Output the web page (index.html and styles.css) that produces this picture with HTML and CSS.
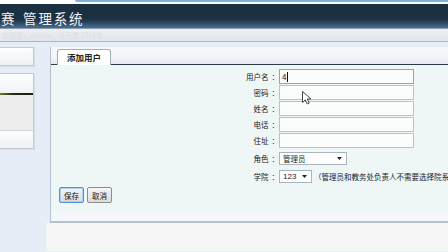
FILE: index.html
```html
<!DOCTYPE html>
<html lang="zh-CN">
<head>
    <meta charset="UTF-8">
    <title>管理系统 - 添加用户</title>
    <link rel="stylesheet" href="styles.css">
</head>
<body>
    <div class="page">
        <div class="top-strip"><div class="glow"></div></div>
        <div class="header">
            <span class="title">赛 管理系统</span>
        </div>
        <div class="subbar"><span class="welcome">欢迎您：admin　今天是 2014年</span></div>

        <div class="main">
            <div class="side">
                <div class="side-box box-small"></div>
                <div class="side-box box-menu">
                    <div class="menu-head"></div>
                    <div class="menu-line"></div>
                    <div class="menu-body"></div>
                    <div class="menu-foot"></div>
                </div>
            </div>

            <div class="content">
                <div class="panel">
                    <div class="tabs">
                        <div class="tab">添加用户</div>
                    </div>
                    <div class="panel-body">
                        <div class="user-form">
                            <div class="row">
                                <label class="lbl">用户名<span class="colon">：</span></label>
                                <div class="field focused"><span>4</span><span class="caret"></span></div>
                            </div>
                            <div class="row">
                                <label class="lbl">密码<span class="colon">：</span></label>
                                <div class="field"></div>
                            </div>
                            <div class="row">
                                <label class="lbl">姓名<span class="colon">：</span></label>
                                <div class="field"></div>
                            </div>
                            <div class="row">
                                <label class="lbl">电话<span class="colon">：</span></label>
                                <div class="field"></div>
                            </div>
                            <div class="row">
                                <label class="lbl">住址<span class="colon">：</span></label>
                                <div class="field"></div>
                            </div>
                            <div class="row row-select">
                                <label class="lbl">角色<span class="colon">：</span></label>
                                <div class="select role">管理员
                                    <svg class="arrow" width="5" height="3" viewBox="0 0 5 3"><path d="M0 0h5L2.5 3z" fill="#222"/></svg>
                                </div>
                            </div>
                            <div class="row row-select">
                                <label class="lbl">学院<span class="colon">：</span></label>
                                <div class="select college">123
                                    <svg class="arrow" width="5" height="3" viewBox="0 0 5 3"><path d="M0 0h5L2.5 3z" fill="#222"/></svg>
                                </div>
                                <span class="note">（管理员和教务处负责人不需要选择院系）</span>
                            </div>
                        </div>
                        <div class="actions">
                            <button class="btn btn-save">保存</button>
                            <button class="btn">取消</button>
                        </div>
                    </div>
                    <div class="panel-foot"></div>
                </div>
                <div class="below"></div>
            </div>
        </div>

        <svg class="pointer" width="10" height="14" viewBox="0 0 10 14">
            <path d="M0.5 0.5V11.5L3.3 8.8L5.3 13L7.2 12.1L5.3 8H9z" fill="#fff" stroke="#333" stroke-width="0.9" stroke-linejoin="round"/>
        </svg>
    </div>
</body>
</html>
```

FILE: styles.css
```css
body {
    margin: 0;
    width: 448px;
    height: 252px;
    overflow: hidden;
    font-family: "Noto Sans CJK SC", "Liberation Sans", sans-serif;
    background: #e6edf6;
    color: #222;
}
.page {
    position: relative;
    height: 252px;
}
.top-strip {
    height: 2px;
    padding-left: 75px;
    background: #fff;
    border-bottom: 2px solid #fff;
}
.top-strip .glow {
    height: 2px;
    background: #80b2dc;
    border-radius: 0 0 0 3px;
}
.header {
    height: 24px;
    background: linear-gradient(#1b3142 0, #1b3142 62%, #2a4862 78%, #4a6e8f 100%);
    border-bottom: 1px solid #8c9bab;
    display: flex;
    align-items: center;
    padding-left: 1px;
}
.title {
    color: #f2f4f6;
    font-size: 13.5px;
    letter-spacing: 1.8px;
    word-spacing: 2px;
    padding-top: 4px;
    white-space: pre;
}
.subbar {
    height: 12px;
    background: linear-gradient(#eceff3, #e1e5ec);
    border-bottom: 1px solid #adb7c3;
    font-size: 7px;
    line-height: 12px;
    padding-left: 2px;
}
.welcome {
    color: #dadee5;
}
.main {
    display: flex;
    height: 209px;
}
.side {
    width: 50px;
    flex: none;
    padding-top: 5px;
}
.side-box {
    width: 33px;
    border: 1px solid #c2c9d2;
    border-left: none;
    box-shadow: 1px 1px 1px rgba(0,0,0,0.06);
}
.box-small {
    height: 17px;
    background: linear-gradient(#fdfefe, #eef1f5);
    margin-bottom: 7px;
}
.menu-head {
    height: 19px;
    background: linear-gradient(#fdfefe, #f1f3f6);
}
.menu-line {
    height: 2px;
    background: linear-gradient(90deg, #6b7a22, #2a2a1c 40%, #1b1b16);
}
.menu-body {
    height: 35px;
    background: #ededed;
}
.menu-foot {
    height: 17px;
    background: linear-gradient(#fdfefe, #eef1f5);
    border-top: 1px solid #d0d5dc;
}
.content {
    flex: 1;
    padding-top: 5px;
    display: flex;
    flex-direction: column;
    min-width: 0;
}
.panel {
    border-left: 1px solid #b5c1ce;
    border-bottom: 2px solid #b7c1cc;
    background: #f4f8fa;
}
.tabs {
    height: 16px;
    padding-top: 1px;
    background: linear-gradient(#f6f8fa, #f3f5f8 60%, #e3e9f0);
    border-bottom: 1px solid #2b3b4b;
    padding-left: 6px;
    display: flex;
    align-items: flex-end;
}
.tab {
    width: 52px;
    height: 15px;
    margin-bottom: -1px;
    background: #fff;
    border: 1px solid #a5adb6;
    border-bottom: none;
    border-radius: 3px 3px 0 0;
    font-size: 8.5px;
    font-weight: bold;
    line-height: 15px;
    text-align: center;
    color: #222;
}
.panel-body {
    height: 143px;
    background: #eef6f6;
    padding: 4px 0 0 0;
    overflow: hidden;
}
.row {
    display: flex;
    align-items: center;
    height: 15px;
    margin-bottom: 1px;
    white-space: nowrap;
}
.row-select {
    height: 18px;
    margin-bottom: 0;
}
.lbl {
    width: 228px;
    flex: none;
    text-align: right;
    font-size: 7.5px;
    color: #222;
}
.colon {
    margin-left: 3px;
}
.field {
    flex: none;
    width: 131px;
    height: 13px;
    border: 1px solid #b6c3cf;
    background: #fbfdfd;
    font-size: 8px;
    line-height: 13px;
    padding-left: 2px;
    display: flex;
    align-items: center;
}
.field.focused {
    border-color: #7eaad0;
}
.caret {
    width: 1px;
    height: 10px;
    background: #111;
    margin-left: 1px;
}
.select {
    flex: none;
    height: 11px;
    border: 1px solid #a9b4bf;
    background: #fff;
    font-size: 7.5px;
    line-height: 11px;
    padding-left: 3px;
    position: relative;
}
.select .arrow {
    position: absolute;
    right: 4px;
    top: 4px;
}
.role {
    width: 63px;
}
.college {
    width: 28px;
    font-family: "Liberation Sans", sans-serif;
    font-size: 8px;
}
.note {
    margin-left: 2px;
    font-size: 7.5px;
    color: #222;
}
.actions {
    padding: 2px 0 0 8px;
    display: flex;
    gap: 3px;
}
.btn {
    height: 16px;
    padding: 0 4px;
    border: 1px solid #8d8d8d;
    border-radius: 2px;
    background: linear-gradient(#f6f6f6, #dcdcdc);
    font-family: "Noto Sans CJK SC", sans-serif;
    font-size: 7.5px;
    color: #111;
    line-height: 13px;
}
.btn-save {
    border-color: #4f95cf;
    box-shadow: inset 0 0 0 1px #a8d0ef;
}
.panel-foot {
    height: 9px;
    background: #f4f8fa;
}
.below {
    flex: 1;
    margin-left: -4px;
    background: #f6f6f6;
}
.pointer {
    position: absolute;
    left: 302px;
    top: 91px;
}
```
